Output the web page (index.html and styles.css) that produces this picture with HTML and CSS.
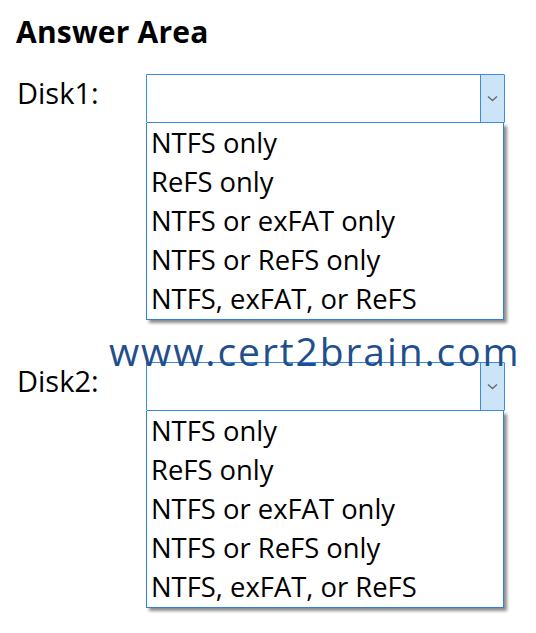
FILE: index.html
```html
<!DOCTYPE html>
<html lang="en">
<head>
<meta charset="utf-8">
<title>Answer Area</title>
<link rel="stylesheet" href="styles.css">
</head>
<body>
<div class="page">
  <h1 class="title">Answer Area</h1>
  <div class="field">
    <div class="label">Disk1:</div>
    <div class="control">
      <div class="combo">
        <div class="combo-value"></div>
        <div class="combo-btn">
          <svg width="11" height="7" viewBox="0 0 11 7"><polyline points="1,1.5 5.5,5.5 10,1.5" fill="none" stroke="#6b6b6b" stroke-width="1.4"/></svg>
        </div>
      </div>
      <ul class="list">
        <li>NTFS only</li>
        <li>ReFS only</li>
        <li>NTFS or exFAT only</li>
        <li>NTFS or ReFS only</li>
        <li>NTFS, exFAT, or ReFS</li>
      </ul>
    </div>
  </div>
  <div class="field field-second">
    <div class="label">Disk2:</div>
    <div class="control">
      <div class="combo">
        <div class="combo-value"></div>
        <div class="combo-btn">
          <svg width="11" height="7" viewBox="0 0 11 7"><polyline points="1,1.5 5.5,5.5 10,1.5" fill="none" stroke="#6b6b6b" stroke-width="1.4"/></svg>
        </div>
      </div>
      <ul class="list">
        <li>NTFS only</li>
        <li>ReFS only</li>
        <li>NTFS or exFAT only</li>
        <li>NTFS or ReFS only</li>
        <li>NTFS, exFAT, or ReFS</li>
      </ul>
    </div>
  </div>
  <div class="watermark">www.cert2brain.com</div>
</div>
</body>
</html>
```

FILE: styles.css
```css
html, body {
  margin: 0;
  padding: 0;
  background: #ffffff;
}
.page {
  position: relative;
  width: 536px;
  height: 633px;
  box-sizing: border-box;
  padding: 14px 0 0 16px;
  font-family: "Open Sans", "Noto Sans", sans-serif;
  color: #000;
}
.title {
  margin: 0;
  font-size: 30px;
  font-weight: 700;
  line-height: 36px;
  letter-spacing: 0.2px;
}
.field {
  display: flex;
  align-items: flex-start;
  margin-top: 24px;
}
.field-second {
  margin-top: 42px;
}
.label {
  width: 129px;
  font-size: 29px;
  line-height: 38px;
  padding-left: 1px;
}
.control {
  width: 359px;
}
.combo {
  display: flex;
  height: 49px;
  box-sizing: border-box;
  border: 1px solid #3c8be0;
  border-radius: 1px;
  background: #fff;
}
.combo-value {
  flex: 1;
}
.combo-btn {
  width: 23px;
  background: #cce4f7;
  border-left: 1px solid #3c8be0;
  display: flex;
  align-items: center;
  justify-content: center;
}
.list {
  list-style: none;
  margin: 0;
  padding: 0 0 1px 0;
  width: 358px;
  box-sizing: border-box;
  border: 1px solid #2f80dc;
  border-top: none;
  background: #fff;
  box-shadow: 3px 3px 3px rgba(0, 0, 0, 0.45);
}
.list li {
  font-size: 27.4px;
  line-height: 39px;
  padding-left: 4px;
  white-space: nowrap;
}
.watermark {
  position: absolute;
  left: 109px;
  top: 328px;
  font-size: 39px;
  line-height: 46px;
  color: #1f4f8c;
  letter-spacing: 1.9px;
  white-space: nowrap;
}
```
